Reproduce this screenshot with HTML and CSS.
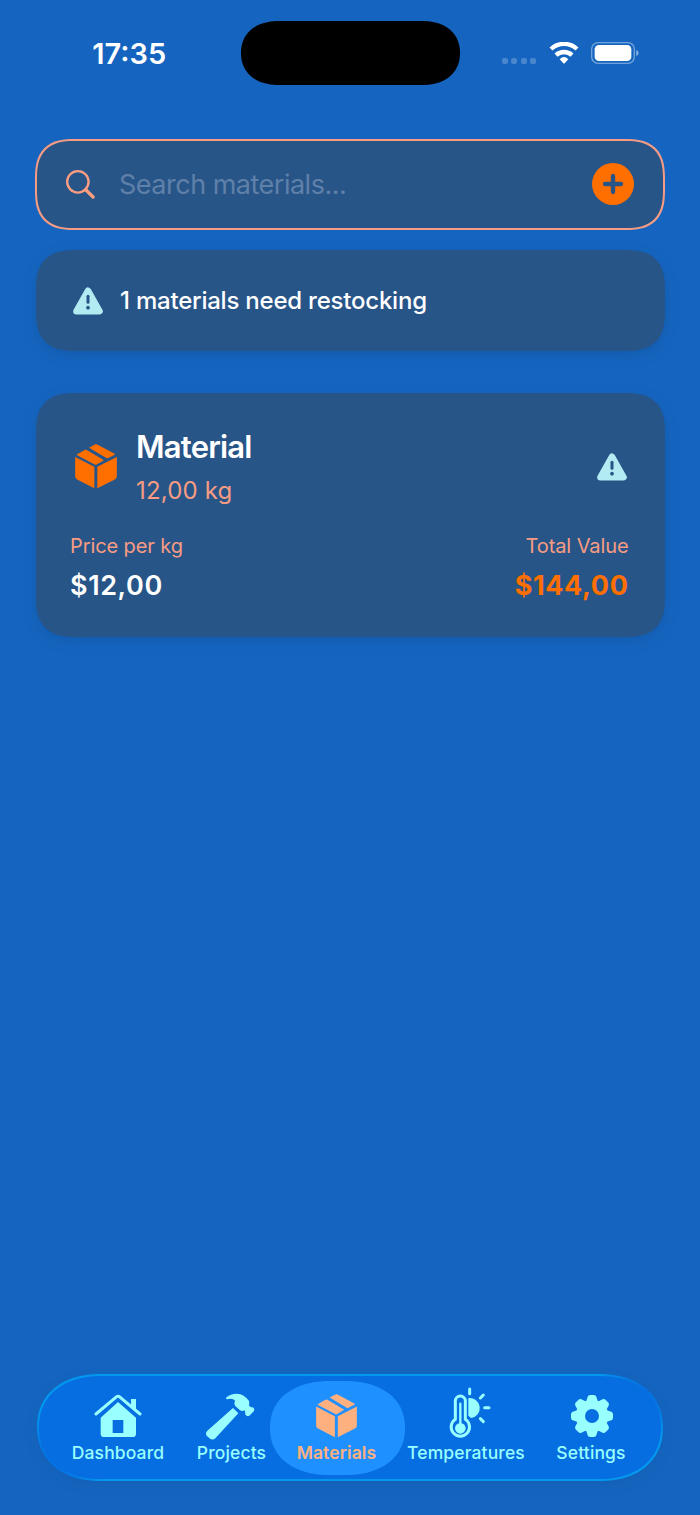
FILE: index.html
```html
<!DOCTYPE html>
<html lang="en">
  <head>
    <meta charset="UTF-8" />
    <meta name="viewport" content="width=device-width, initial-scale=1.0" />
    <title>Materials</title>
    <link rel="stylesheet" href="styles.css">
  </head>
  <body>
    <!-- shared icons -->
    <svg class="sprite" width="0" height="0">
      <symbol id="icon-warning" viewBox="0 0 90 82">
        <path class="warning-shape" d="M45 10 L80 72 H10 Z" />
        <path class="warning-mark" d="M45 27 V45" />
        <circle class="warning-dot" cx="45" cy="61" r="5.5" />
      </symbol>
      <symbol id="icon-box" viewBox="0 0 126 136">
        <path d="M6 31 L29 18 Q32 16 35 18 L87 49 L65 62 Q62 64 59 62 L6 34 Q4 32 6 31 Z" />
        <path d="M42 11 L58 2 Q63 -1 68 2 L118 29 Q122 31 118 33 L97 44 Z" />
        <path d="M0 39 L58 69 V134 L6 107 Q0 104 0 97 Z" />
        <path d="M126 39 L67 69 V134 L120 107 Q126 104 126 97 Z" />
      </symbol>
    </svg>

    <div class="screen">
      <header class="status-bar">
        <div class="time">17:35</div>
        <div class="island"></div>
        <div class="status-icons">
          <div class="signal"><i></i><i></i><i></i><i></i></div>
          <svg class="wifi" viewBox="0 0 90 66">
            <path class="wifi-outer" d="M6 21 A57 57 0 0 1 84 21" />
            <path class="wifi-inner" d="M21 39.5 A35 35 0 0 1 69 39.5" />
            <path d="M32 52 Q45 38 58 52 L47 64 Q45 66 43 64 Z" />
          </svg>
          <svg class="battery" viewBox="0 0 144 66">
            <rect class="battery-case" x="2" y="2" width="128" height="62" rx="19" />
            <rect x="11" y="9" width="110" height="48" rx="13" />
            <path class="battery-tip" d="M136 24 Q143 27 143 33 Q143 39 136 42 Z" />
          </svg>
        </div>
      </header>

      <main class="content">
        <div class="search">
          <svg class="search-icon" viewBox="0 0 88 88">
            <circle cx="36" cy="36" r="32.5" />
            <path d="M60 60 L82 82" />
          </svg>
          <span class="placeholder">Search materials...</span>
          <button class="add">
            <svg viewBox="0 0 126 126">
              <path d="M63 39 V87 M39 63 H87" />
            </svg>
          </button>
        </div>

        <div class="card alert">
          <svg class="warning"><use href="#icon-warning" /></svg>
          <span>1 materials need restocking</span>
        </div>

        <div class="card material">
          <div class="material-head">
            <svg class="box"><use href="#icon-box" /></svg>
            <div class="material-info">
              <h2>Material</h2>
              <p>12,00 kg</p>
            </div>
            <svg class="warning"><use href="#icon-warning" /></svg>
          </div>
          <div class="material-values">
            <div class="value">
              <span class="label">Price per kg</span>
              <span class="amount">$12,00</span>
            </div>
            <div class="value right">
              <span class="label">Total Value</span>
              <span class="amount total">$144,00</span>
            </div>
          </div>
        </div>
      </main>

      <nav class="tab-bar">
        <a class="tab dashboard">
          <svg class="tab-icon" width="48" height="44" viewBox="0 0 144 132">
            <path d="M20 71 L72 24 L126 71 V119 Q126 129 116 129 H30 Q20 129 20 119 Z M56 78 V117 H88 V78 Z" fill-rule="evenodd" />
            <path d="M111 15 H126 V49 L111 36 Z" />
            <path class="roof" d="M6 60 L68 8 Q72 5 76 8 L138 60" />
          </svg>
          <span>Dashboard</span>
        </a>
        <a class="tab projects">
          <svg class="tab-icon" width="50" height="48" viewBox="0 0 150 144">
            <path d="M84 45 L100 61 L31 136 Q22 144 12 134 L5 128 Q0 120 7 113 Z" />
            <path d="M63 14 Q76 2 96 2 Q118 3 132 24 Q134 30 132 38 Q138 44 144 43 Q150 48 147 54 L133 68 Q127 72 121 65 Q121 57 119 52 Q112 56 105 52 L90 38 Q86 27 91 24 Q83 14 67 19 Q61 18 63 14 Z" />
          </svg>
          <span>Projects</span>
        </a>
        <a class="tab materials active">
          <svg class="tab-icon" width="41" height="44"><use href="#icon-box" /></svg>
          <span>Materials</span>
        </a>
        <a class="tab temperatures">
          <svg class="tab-icon" width="42" height="53" viewBox="0 0 126 159">
            <path class="tube" d="M19 97 V42 A15 15 0 0 1 49 42 V97 A27.5 27.5 0 1 1 19 97 Z" />
            <path class="mercury" d="M34 50 V120" />
            <circle cx="34" cy="124" r="16" />
            <path d="M58 33 A30 30 0 0 1 66 93 L58 86 Z" />
            <path class="rays" d="M62 6 V20 M94 33 L103 24 M107 62 H120 M94 95 L103 104" />
          </svg>
          <span>Temperatures</span>
        </a>
        <a class="tab settings">
          <svg class="tab-icon" width="42" height="42" viewBox="-63 -63 126 126">
            <g id="teeth">
              <path id="tooth" d="M-18 -42 L-13 -58 Q-11 -63 -6 -63 H6 Q11 -63 13 -58 L18 -42 Z M-18 42 L-13 58 Q-11 63 -6 63 H6 Q11 63 13 58 L18 42 Z" />
              <use href="#tooth" transform="rotate(45)" />
            </g>
            <use href="#teeth" transform="rotate(90)" />
            <circle class="gear-ring" r="35" />
          </svg>
          <span>Settings</span>
        </a>
      </nav>
    </div>
  </body>
</html>
```

FILE: styles.css
```css
* {
  box-sizing: border-box;
}

body {
  margin: 0;
  background-color: #1565c0;
  color: #fff;
  font-family: Inter, "Liberation Sans", sans-serif;
}

svg {
  display: block;
  fill: currentColor;
  flex-shrink: 0;
}

.sprite {
  position: absolute;
}

.screen {
  display: flex;
  flex-direction: column;
  width: 700px;
  height: 1515px;
  overflow: hidden;
}

/* Status bar */
.status-bar {
  display: grid;
  grid-template-columns: 1fr 219px 1fr;
  align-items: center;
  height: 106px;
}

.time {
  padding-left: 18px;
  text-align: center;
  font-size: 29px;
  font-weight: 600;
}

.island {
  height: 64px;
  border-radius: 38px / 32px;
  corner-shape: superellipse(1.15);
  background-color: #000;
}

.status-icons {
  display: flex;
  align-items: center;
  padding-left: 42px;
}

.signal {
  display: flex;
  gap: 3.5px;
  padding-top: 15px;
  margin-right: 12.5px;
}

.signal i {
  width: 6px;
  height: 6px;
  border-radius: 2px;
  background-color: rgba(255, 255, 255, 0.22);
}

.wifi {
  width: 30px;
  height: 22px;
  margin-right: 12.5px;
}

.wifi-outer,
.wifi-inner {
  fill: none;
  stroke: currentColor;
  stroke-width: 13;
}

.battery {
  width: 48px;
  height: 22px;
}

.battery-case {
  fill: none;
  stroke: currentColor;
  stroke-width: 4;
  opacity: 0.4;
}

.battery-tip {
  opacity: 0.5;
}

/* Content */
.content {
  display: flex;
  flex-direction: column;
  padding: 33px 35px 0;
}

.search {
  display: flex;
  align-items: center;
  height: 91px;
  padding: 0 29px;
  border: 2px solid #f79c83;
  border-radius: 40px;
  corner-shape: superellipse(1.4);
  background-color: #285588;
}

.search-icon {
  width: 29px;
  height: 29px;
  fill: none;
  stroke: #ff9e80;
  stroke-width: 7;
  stroke-linecap: round;
}

.search-icon path {
  stroke-width: 10;
}

.placeholder {
  flex: 1;
  margin-left: 24px;
  color: #5f80a8;
  font-size: 27px;
  letter-spacing: -0.5px;
}

.add {
  width: 42px;
  height: 42px;
  margin-top: -1px;
  padding: 0;
  border: none;
  border-radius: 50%;
  background-color: #ff6f00;
}

.add svg {
  stroke: #285588;
  stroke-width: 13;
  stroke-linecap: round;
}

.card {
  margin: 0 0.5px;
  border-radius: 40px;
  corner-shape: superellipse(1.4);
  background-color: #285588;
  box-shadow: 0 4px 16px rgba(0, 0, 0, 0.1);
}

.warning {
  width: 30px;
  height: 28px;
  color: #b2ebf2;
}

.warning-shape {
  stroke: currentColor;
  stroke-width: 19;
  stroke-linejoin: round;
}

.warning-mark {
  stroke: #285588;
  stroke-width: 9;
  stroke-linecap: round;
}

.warning-dot {
  fill: #285588;
}

.alert {
  display: flex;
  align-items: center;
  gap: 17.5px;
  height: 101px;
  margin-top: 20px;
  padding: 0 37px;
  font-size: 24px;
  font-weight: 500;
  letter-spacing: -0.22px;
}

.material {
  height: 244px;
  margin-top: 42px;
  padding: 33px 36px 0 34.5px;
}

.material-head {
  display: flex;
  align-items: center;
  height: 85px;
}

.box {
  width: 42px;
  height: 45px;
  margin: 0 19px 4px 5px;
  color: #ff6f00;
}

.material-head .warning {
  margin: 0 2px 4px 0;
}

.material-info {
  flex: 1;
}

.material-info h2 {
  margin: 0 0 4px;
  font-size: 31px;
  font-weight: 600;
  line-height: 40px;
  letter-spacing: -0.8px;
}

.material-info p {
  margin: 0;
  color: #f79c83;
  font-size: 24px;
  line-height: 40px;
  letter-spacing: 0.15px;
}

.material-values {
  display: flex;
  justify-content: space-between;
  margin-top: 15px;
}

.value {
  display: flex;
  flex-direction: column;
}

.value.right {
  align-items: flex-end;
}

.label {
  color: #f79c83;
  font-size: 20px;
  line-height: 40px;
  letter-spacing: -0.1px;
}

.amount {
  font-size: 27px;
  font-weight: 600;
  line-height: 40px;
  letter-spacing: 0.6px;
}

.total {
  color: #ff6f00;
  font-weight: 700;
}

/* Tab bar */
.tab-bar {
  display: grid;
  grid-template-columns: 128px 99px 112px 146px 104px;
  height: 107px;
  margin: auto 37px 34px;
  padding-left: 15px;
  border: 2px solid transparent;
  border-radius: 64px / 53.5px;
  corner-shape: superellipse(1.15);
  background:
    linear-gradient(#066ee0, #066ee0) padding-box,
    linear-gradient(45deg, #066ee0 4%, #0298ef 9%, #0298ef 91%, #066ee0 96%) border-box;
  box-shadow: 0 4px 16px rgba(0, 0, 0, 0.06);
}

.tab {
  position: relative;
  display: flex;
  flex-direction: column;
  align-items: center;
  justify-content: flex-end;
  padding-bottom: 14px;
  color: #99ffff;
}

.tab span {
  position: relative;
  margin-top: 3px;
  font-size: 17.5px;
  font-weight: 500;
  line-height: 24px;
  letter-spacing: 0.13px;
}

.tab-icon {
  position: relative;
}

.projects .tab-icon {
  margin: 0 3px -3px 0;
}

.materials .tab-icon {
  margin-right: 1px;
}

.temperatures .tab-icon {
  margin: 0 0 -2px 8px;
}

.settings .tab-icon {
  margin: 0 0 1px 2px;
}

.active {
  color: #ffb07f;
}

.active span {
  margin-right: 1px;
  font-weight: 600;
}

/* highlight behind the current tab */
.active::before {
  content: "";
  position: absolute;
  top: 5px;
  bottom: 4px;
  left: -11px;
  right: -11.5px;
  border-radius: 60px / 47px;
  corner-shape: superellipse(1.15);
  background-color: #1e90ff;
}

.roof,
.tube,
.mercury,
.rays,
.gear-ring {
  fill: none;
  stroke: currentColor;
  stroke-linecap: round;
}

.roof {
  stroke-width: 9;
}

.tube {
  stroke-width: 9;
}

.mercury {
  stroke-width: 7;
}

.rays {
  stroke-width: 9;
}

.gear-ring {
  stroke-width: 28;
}
```
